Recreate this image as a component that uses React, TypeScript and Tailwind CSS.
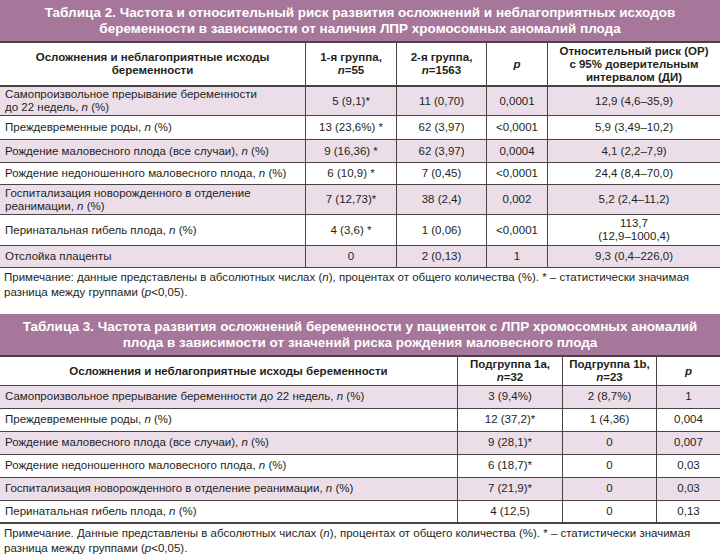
import React from "react";

const B = "border-[#4a4343]";

type Cell = React.ReactNode;

function N() {
  return <i>n</i>;
}

function Row2({ cells, shaded, h }: { cells: Cell[]; shaded: boolean; h: string }) {
  return (
    <div
      className={`grid grid-cols-[305px_91px_90px_61px_173px] border-b ${B} ${h} ${shaded ? "bg-[#ecdee9]" : "bg-white"}`}
    >
      {cells.map((c, i) => (
        <div
          key={i}
          className={
            i === 0
              ? "flex items-center px-[5px] leading-[13px]"
              : `flex items-center justify-center text-center border-l ${B} leading-[13px]`
          }
        >
          <div>{c}</div>
        </div>
      ))}
    </div>
  );
}

function Row3({ cells, shaded, last }: { cells: Cell[]; shaded: boolean; last?: boolean }) {
  return (
    <div
      className={`grid grid-cols-[457px_105px_94px_64px] h-[23px] ${last ? "border-b-2" : "border-b"} ${B} ${shaded ? "bg-[#ecdee9]" : "bg-white"}`}
    >
      {cells.map((c, i) => (
        <div
          key={i}
          className={
            i === 0
              ? "flex items-center px-[5px]"
              : `flex items-center justify-center text-center border-l ${B}`
          }
        >
          <div>{c}</div>
        </div>
      ))}
    </div>
  );
}

export default function App() {
  const t2: { cells: Cell[]; h: string }[] = [
    {
      h: "h-[29px]",
      cells: [
        <>
          Самопроизвольное прерывание беременности
          <br />
          до 22 недель, <N /> (%)
        </>,
        "5 (9,1)*",
        "11 (0,70)",
        "0,0001",
        "12,9 (4,6–35,9)",
      ],
    },
    {
      h: "h-[24px]",
      cells: [<>Преждевременные роды, <N /> (%)</>, "13 (23,6%) *", "62 (3,97)", "<0,0001", "5,9 (3,49–10,2)"],
    },
    {
      h: "h-[23px]",
      cells: [<>Рождение маловесного плода (все случаи), <N /> (%)</>, "9 (16,36) *", "62 (3,97)", "0,0004", "4,1 (2,2–7,9)"],
    },
    {
      h: "h-[22px]",
      cells: [<>Рождение недоношенного маловесного плода, <N /> (%)</>, "6 (10,9) *", "7 (0,45)", "<0,0001", "24,4 (8,4–70,0)"],
    },
    {
      h: "h-[30px]",
      cells: [
        <>
          Госпитализация новорожденного в отделение
          <br />
          реанимации, <N /> (%)
        </>,
        "7 (12,73)*",
        "38 (2,4)",
        "0,002",
        "5,2 (2,4–11,2)",
      ],
    },
    {
      h: "h-[31px]",
      cells: [
        <>Перинатальная гибель плода, <N /> (%)</>,
        "4 (3,6) *",
        "1 (0,06)",
        "<0,0001",
        <>
          113,7
          <br />
          (12,9–1000,4)
        </>,
      ],
    },
    {
      h: "h-[22px]",
      cells: ["Отслойка плаценты", "0", "2 (0,13)", "1", "9,3 (0,4–226,0)"],
    },
  ];

  const t3: Cell[][] = [
    [<>Самопроизвольное прерывание беременности до 22 недель, <N /> (%)</>, "3 (9,4%)", "2 (8,7%)", "1"],
    [<>Преждевременные роды, <N /> (%)</>, "12 (37,2)*", "1 (4,36)", "0,004"],
    [<>Рождение маловесного плода (все случаи), <N /> (%)</>, "9 (28,1)*", "0", "0,007"],
    [<>Рождение недоношенного маловесного плода, <N /> (%)</>, "6 (18,7)*", "0", "0,03"],
    [<>Госпитализация новорожденного в отделение реанимации, <N /> (%)</>, "7 (21,9)*", "0", "0,03"],
    [<>Перинатальная гибель плода, <N /> (%)</>, "4 (12,5)", "0", "0,13"],
  ];

  return (
    <div
      className="w-[720px] h-[557px] bg-white text-[#231f20] text-[11.5px] overflow-hidden"
      style={{ fontFamily: '"Liberation Sans", Arial, sans-serif' }}
    >
      {/* Table 2 */}
      <div className={`h-[41px] bg-[#a6779a] text-white font-bold text-[13.5px] leading-[16px] flex items-center justify-center text-center border-b-2 ${B} box-content`}>
        <div>
          Таблица 2. Частота и относительный риск развития осложнений и неблагоприятных исходов
          <br />
          беременности в зависимости от наличия ЛПР хромосомных аномалий плода
        </div>
      </div>
      <div className={`grid grid-cols-[305px_91px_90px_61px_173px] h-[42px] border-b-2 ${B} font-bold leading-[13px] box-content`}>
        <div className="flex items-center justify-center text-center">
          <div>
            Осложнения и неблагоприятные исходы
            <br />
            беременности
          </div>
        </div>
        <div className={`flex items-center justify-center text-center border-l ${B}`}>
          <div>
            1-я группа,
            <br />
            <i>n</i>=55
          </div>
        </div>
        <div className={`flex items-center justify-center text-center border-l ${B}`}>
          <div>
            2-я группа,
            <br />
            <i>n</i>=1563
          </div>
        </div>
        <div className={`flex items-center justify-center text-center border-l ${B}`}>
          <i>p</i>
        </div>
        <div className={`flex items-center justify-center text-center border-l ${B}`}>
          <div>
            Относительный риск (ОР)
            <br />с 95% доверительным
            <br />
            интервалом (ДИ)
          </div>
        </div>
      </div>
      {t2.map((r, i) => (
        <Row2 key={i} cells={r.cells} h={r.h} shaded={i % 2 === 0} />
      ))}
      <div className="px-[4px] pt-[2px] leading-[15px] whitespace-nowrap">
        Примечание: данные представлены в абсолютных числах (<i>n</i>), процентах от общего количества (%). * – статистически значимая
        <br />
        разница между группами (<i>p</i>&lt;0,05).
      </div>

      {/* Table 3 */}
      <div className={`mt-[14px] h-[41px] bg-[#a6779a] text-white font-bold text-[13.5px] leading-[16px] flex items-center justify-center text-center border-b-2 ${B} box-content`}>
        <div>
          Таблица 3. Частота развития осложнений беременности у пациенток с ЛПР хромосомных аномалий
          <br />
          плода в зависимости от значений риска рождения маловесного плода
        </div>
      </div>
      <div className={`grid grid-cols-[457px_105px_94px_64px] h-[28px] border-b ${B} font-bold leading-[13px] box-content`}>
        <div className="flex items-center justify-center text-center">
          Осложнения и неблагоприятные исходы беременности
        </div>
        <div className={`flex items-center justify-center text-center border-l ${B}`}>
          <div>
            Подгруппа 1a,
            <br />
            <i>n</i>=32
          </div>
        </div>
        <div className={`flex items-center justify-center text-center border-l ${B}`}>
          <div>
            Подгруппа 1b,
            <br />
            <i>n</i>=23
          </div>
        </div>
        <div className={`flex items-center justify-center text-center border-l ${B}`}>
          <i>p</i>
        </div>
      </div>
      {t3.map((r, i) => (
        <Row3 key={i} cells={r} shaded={i % 2 === 0} last={i === t3.length - 1} />
      ))}
      <div className="px-[4px] pt-[2px] leading-[15px] whitespace-nowrap">
        Примечание. Данные представлены в абсолютных числах (<i>n</i>), процентах от общего количества (%). * – статистически значимая
        <br />
        разница между группами (<i>p</i>&lt;0,05).
      </div>
    </div>
  );
}
